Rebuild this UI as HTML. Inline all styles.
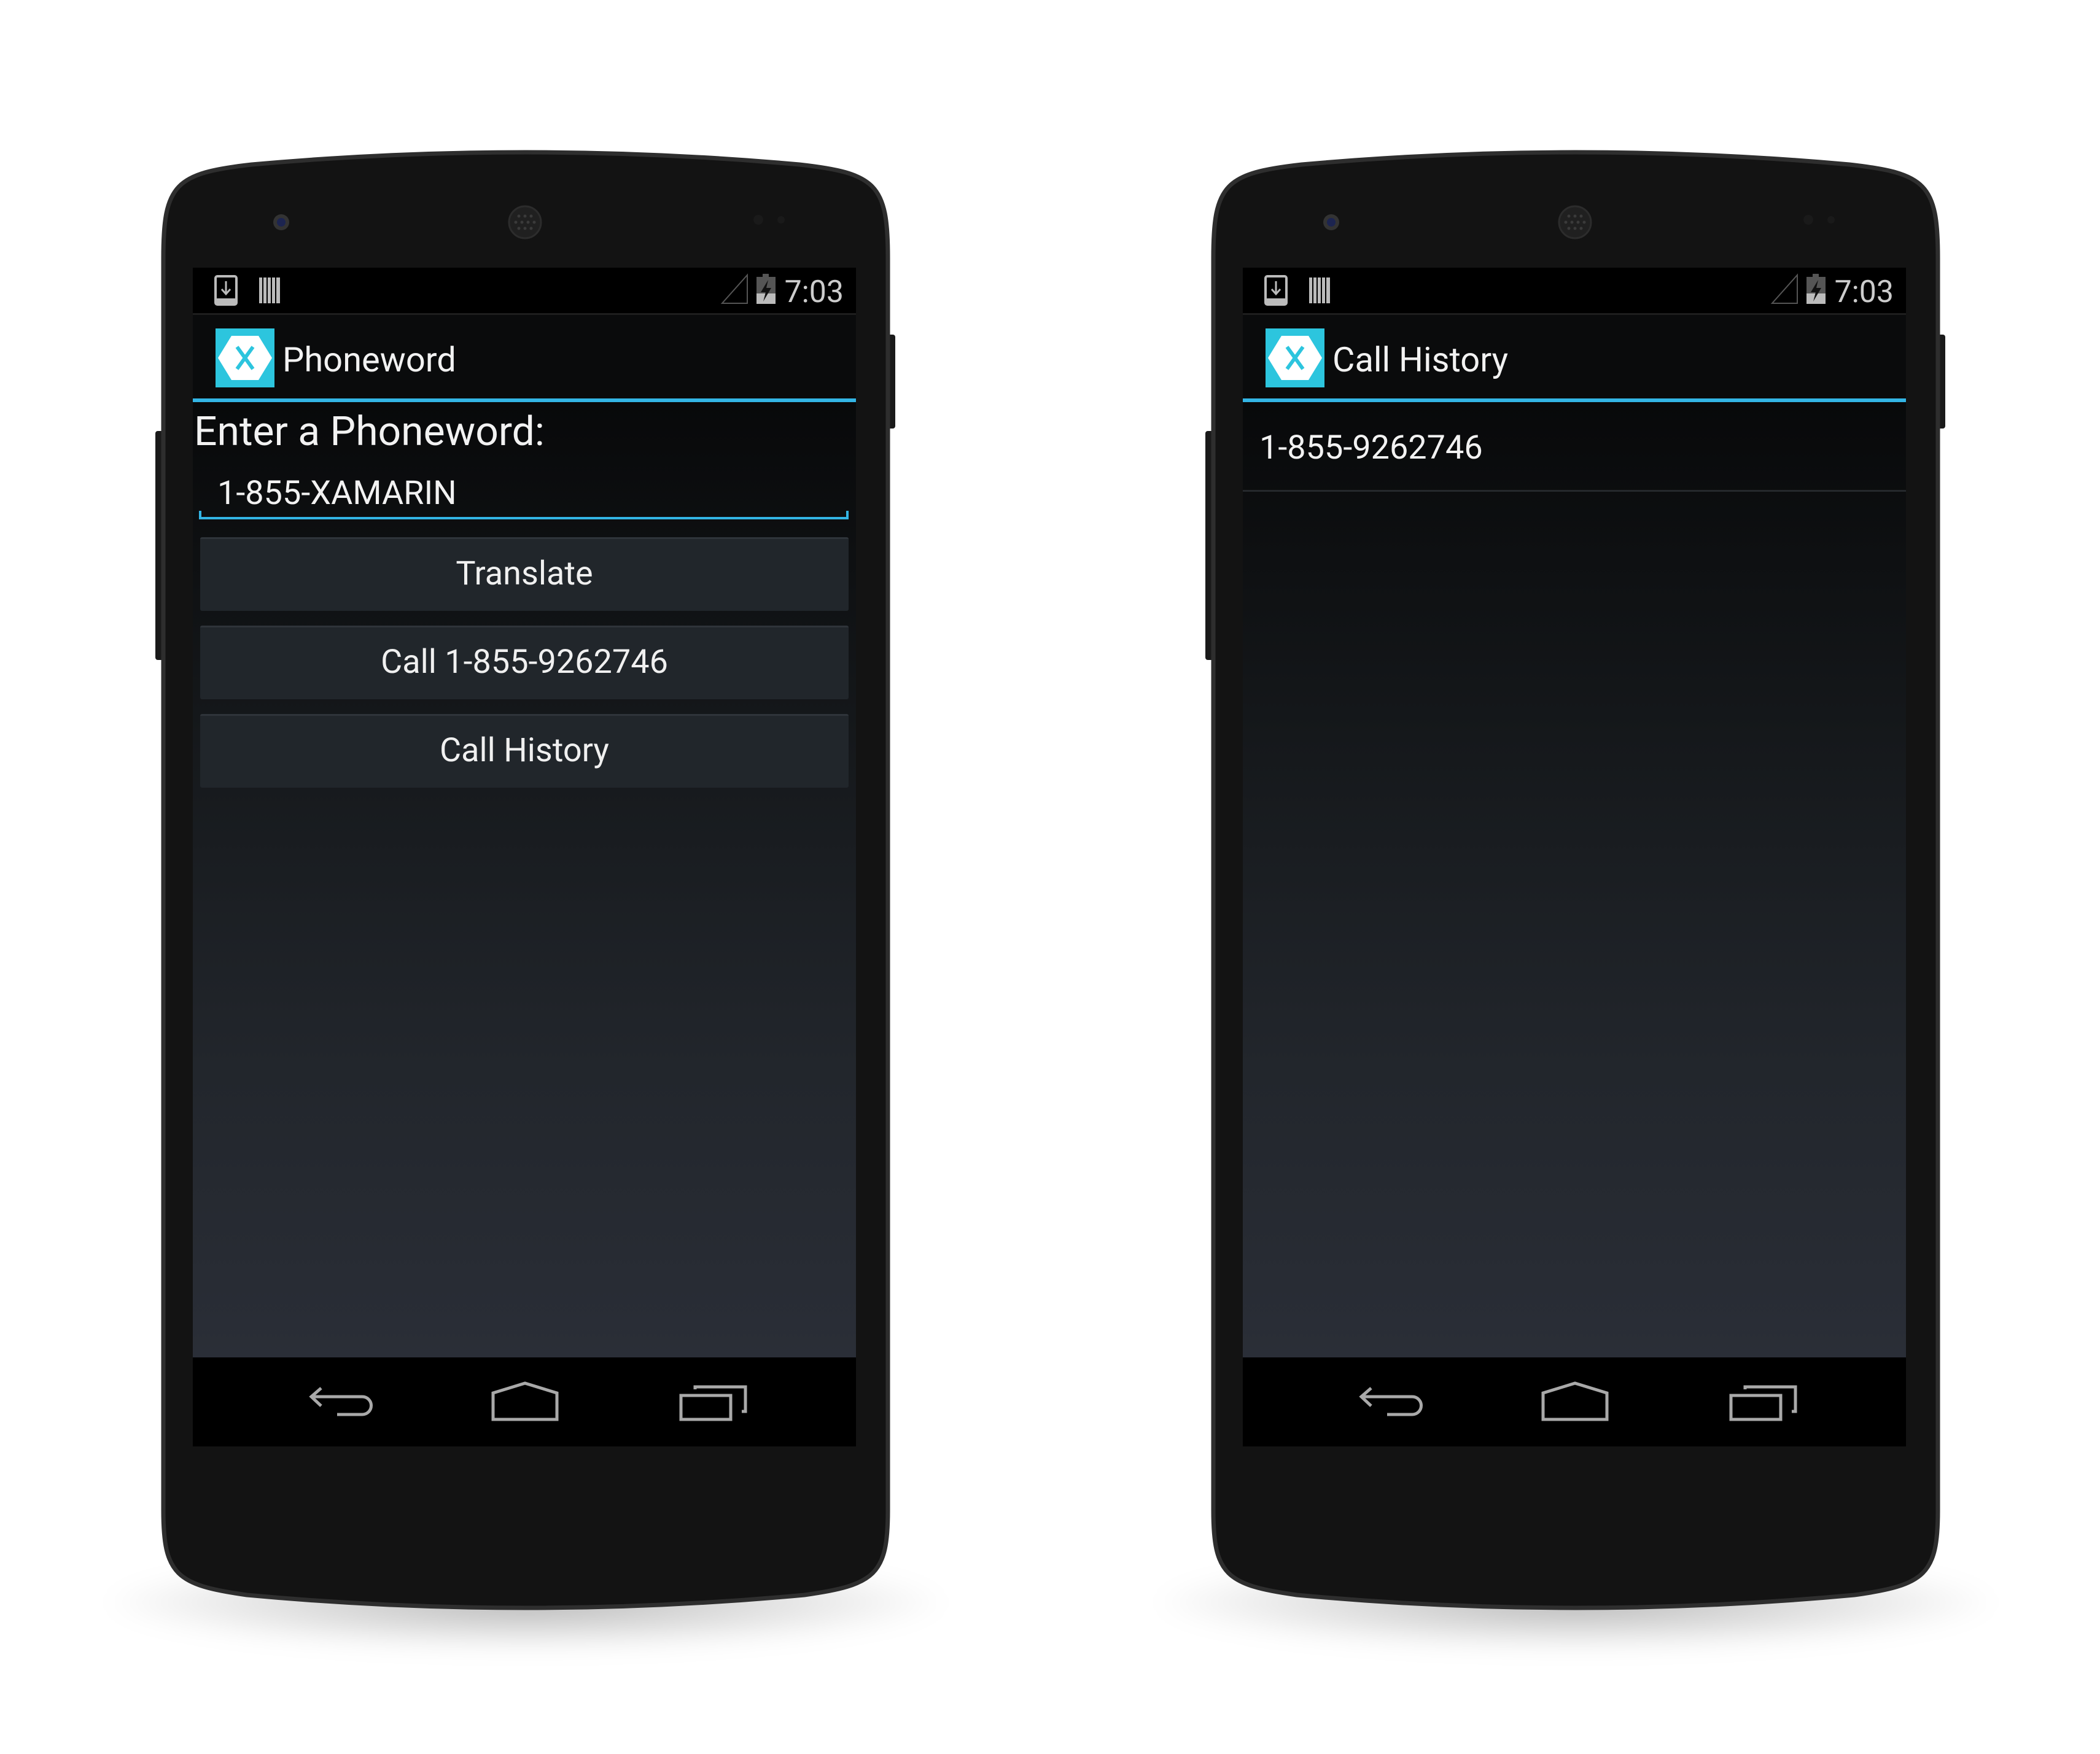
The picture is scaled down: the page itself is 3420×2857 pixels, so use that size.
<!DOCTYPE html>
<html><head><meta charset="utf-8"><style>
html,body{margin:0;padding:0;background:#fff;}
body{width:3420px;height:2857px;position:relative;overflow:hidden;font-family:"Roboto","Liberation Sans",sans-serif;}
.abs{position:absolute;}
.shadow{position:absolute;top:2530px;width:1400px;height:160px;border-radius:50%;background:radial-gradient(ellipse at center,rgba(0,0,0,0.28) 0%,rgba(0,0,0,0.1) 45%,rgba(0,0,0,0) 70%);filter:blur(18px);}
.scr{position:absolute;top:436px;width:1080px;height:1920px;background:#000;overflow:hidden;}
.status{position:absolute;left:0;top:0;width:1080px;height:74px;background:#000;border-bottom:3px solid #1e1e1e;}
.action{position:absolute;left:0;top:77px;width:1080px;height:136px;background:#0a0b0c;}
.blue{position:absolute;left:0;top:213px;width:1080px;height:6px;background:#33b5e5;}
.content{position:absolute;left:0;top:219px;width:1080px;height:1556px;background:linear-gradient(#08090a 0%,#15181b 35%,#22262c 70%,#2a2e37 100%);}
.nav{position:absolute;left:0;top:1775px;width:1080px;height:145px;background:#000;}
.t{position:absolute;color:#f2f2f2;white-space:nowrap;line-height:1;}
.btn{position:absolute;left:12px;width:1056px;height:120px;background:#21262b;border-top:3px solid #2f343a;box-sizing:border-box;border-radius:3px;color:#f0f0f0;font-size:54px;text-align:center;line-height:114px;}
</style></head><body>

<div class="shadow" style="left:156px"></div>
<div class="shadow" style="left:1866px"></div>

<svg class="abs" style="left:0;top:0" width="3420" height="2857">
 <g id="ph">
  <rect x="1444" y="545" width="14" height="153" rx="4" fill="#1a1a1a"/>
  <rect x="253" y="702" width="15" height="373" rx="4" fill="#1a1a1a"/>
  <path d="M266,420 C266,300 285,282 410,268 Q856,228 1302,268 C1427,282 1446,300 1446,420 L1446,2460 C1446,2565 1425,2582 1310,2598 Q856,2640 402,2598 C287,2582 266,2565 266,2460 Z" fill="#131313" stroke="#2e2e2e" stroke-width="7"/>
  <circle cx="855" cy="362" r="26" fill="#202020" stroke="#2c2c2c" stroke-width="3"/>
  <g fill="#3a3a3a">
   <circle cx="845" cy="352" r="2.5"/><circle cx="855" cy="352" r="2.5"/><circle cx="865" cy="352" r="2.5"/>
   <circle cx="840" cy="362" r="2.5"/><circle cx="850" cy="362" r="2.5"/><circle cx="860" cy="362" r="2.5"/><circle cx="870" cy="362" r="2.5"/>
   <circle cx="845" cy="372" r="2.5"/><circle cx="855" cy="372" r="2.5"/><circle cx="865" cy="372" r="2.5"/>
  </g>
  <circle cx="458" cy="362" r="13" fill="#333"/>
  <circle cx="458" cy="362" r="7" fill="#1c2450"/>
  <circle cx="1235" cy="358" r="8" fill="#1a1a1a"/>
  <circle cx="1272" cy="358" r="6" fill="#1a1a1a"/>
 </g>
 <use href="#ph" x="1710" y="0"/>
</svg>

<div class="scr" style="left:314px">
 <div class="status">
  <svg class="abs" style="left:0;top:0" width="1080" height="74">
   <rect x="37" y="14" width="34" height="46" rx="3" fill="none" stroke="#bbb" stroke-width="4"/>
   <rect x="37" y="50" width="34" height="10" fill="#bbb"/>
   <path d="M54,22 V42 M47,35 L54,43 L61,35" stroke="#bbb" stroke-width="3" fill="none"/>
   <g fill="#bbb"><rect x="108" y="16" width="5" height="42"/><rect x="115" y="16" width="5" height="42"/><rect x="122" y="16" width="5" height="42"/><rect x="129" y="16" width="5" height="42"/><rect x="136" y="16" width="6" height="42"/></g>
   <path d="M862,58 L903,12 L903,58 Z" fill="none" stroke="#555" stroke-width="2"/>
   <rect x="928" y="10" width="10" height="6" fill="#555"/>
   <rect x="918" y="15" width="31" height="44" fill="#555"/>
   <rect x="918" y="42" width="31" height="17" fill="#bbb"/>
   <path d="M937,20 L925,40 L933,40 L929,55 L942,33 L934,33 Z" fill="#111"/>
  </svg>
  <div class="t" style="right:20px;top:15px;font-size:50px;color:#ccc">7:03</div>
 </div>
 <div class="action">
  <svg class="abs" style="left:37px;top:22px" width="96" height="96">
   <rect width="96" height="96" fill="#2cc5de"/>
   <path d="M26,12 H70 L92,48 L70,84 H26 L4,48 Z" fill="#fff"/>
   <path d="M35,30 L61,66 M61,30 L35,66" stroke="#2cc5de" stroke-width="6"/>
  </svg>
  <div class="t" style="left:146px;top:45px;font-size:56px">Phoneword</div>
 </div>
 <div class="blue"></div>
 <div class="content"></div>
 <div class="t" style="left:2px;top:235px;font-size:66px">Enter a Phoneword:</div>
 <div class="t" style="left:40px;top:341px;font-size:54px">1-855-XAMARIN</div>
 <div class="abs" style="left:10px;top:406px;width:1058px;height:4px;background:#33b5e5"></div>
 <div class="abs" style="left:10px;top:396px;width:4px;height:12px;background:#33b5e5"></div>
 <div class="abs" style="left:1064px;top:396px;width:4px;height:12px;background:#33b5e5"></div>
 <div class="btn" style="top:439px">Translate</div>
 <div class="btn" style="top:583px">Call 1-855-9262746</div>
 <div class="btn" style="top:727px">Call History</div>
 <div class="nav">
  <svg class="abs" style="left:0;top:0" width="1080" height="145">
   <g fill="none" stroke="#a9a9a9" stroke-width="5">
    <path d="M209,50 L193,64 L209,79 M195,64 H276 A14,14 0 0 1 276,93 H235"/>
    <path d="M489,101 V58 L541,42 L593,58 V101 Z"/>
    <path d="M795,62 H876 V101 H795 Z M818,52 V48 H900 V88 H894"/>
   </g>
  </svg>
 </div>
</div>

<div class="scr" style="left:2024px">
 <div class="status">
  <svg class="abs" style="left:0;top:0" width="1080" height="74">
   <rect x="37" y="14" width="34" height="46" rx="3" fill="none" stroke="#bbb" stroke-width="4"/>
   <rect x="37" y="50" width="34" height="10" fill="#bbb"/>
   <path d="M54,22 V42 M47,35 L54,43 L61,35" stroke="#bbb" stroke-width="3" fill="none"/>
   <g fill="#bbb"><rect x="108" y="16" width="5" height="42"/><rect x="115" y="16" width="5" height="42"/><rect x="122" y="16" width="5" height="42"/><rect x="129" y="16" width="5" height="42"/><rect x="136" y="16" width="6" height="42"/></g>
   <path d="M862,58 L903,12 L903,58 Z" fill="none" stroke="#555" stroke-width="2"/>
   <rect x="928" y="10" width="10" height="6" fill="#555"/>
   <rect x="918" y="15" width="31" height="44" fill="#555"/>
   <rect x="918" y="42" width="31" height="17" fill="#bbb"/>
   <path d="M937,20 L925,40 L933,40 L929,55 L942,33 L934,33 Z" fill="#111"/>
  </svg>
  <div class="t" style="right:20px;top:15px;font-size:50px;color:#ccc">7:03</div>
 </div>
 <div class="action">
  <svg class="abs" style="left:37px;top:22px" width="96" height="96">
   <rect width="96" height="96" fill="#2cc5de"/>
   <path d="M26,12 H70 L92,48 L70,84 H26 L4,48 Z" fill="#fff"/>
   <path d="M35,30 L61,66 M61,30 L35,66" stroke="#2cc5de" stroke-width="6"/>
  </svg>
  <div class="t" style="left:146px;top:45px;font-size:56px">Call History</div>
 </div>
 <div class="blue"></div>
 <div class="content"></div>
 <div class="t" style="left:27px;top:267px;font-size:54px">1-855-9262746</div>
 <div class="abs" style="left:0;top:362px;width:1080px;height:3px;background:#25282c"></div>
 <div class="nav">
  <svg class="abs" style="left:0;top:0" width="1080" height="145">
   <g fill="none" stroke="#a9a9a9" stroke-width="5">
    <path d="M209,50 L193,64 L209,79 M195,64 H276 A14,14 0 0 1 276,93 H235"/>
    <path d="M489,101 V58 L541,42 L593,58 V101 Z"/>
    <path d="M795,62 H876 V101 H795 Z M818,52 V48 H900 V88 H894"/>
   </g>
  </svg>
 </div>
</div>

</body></html>
